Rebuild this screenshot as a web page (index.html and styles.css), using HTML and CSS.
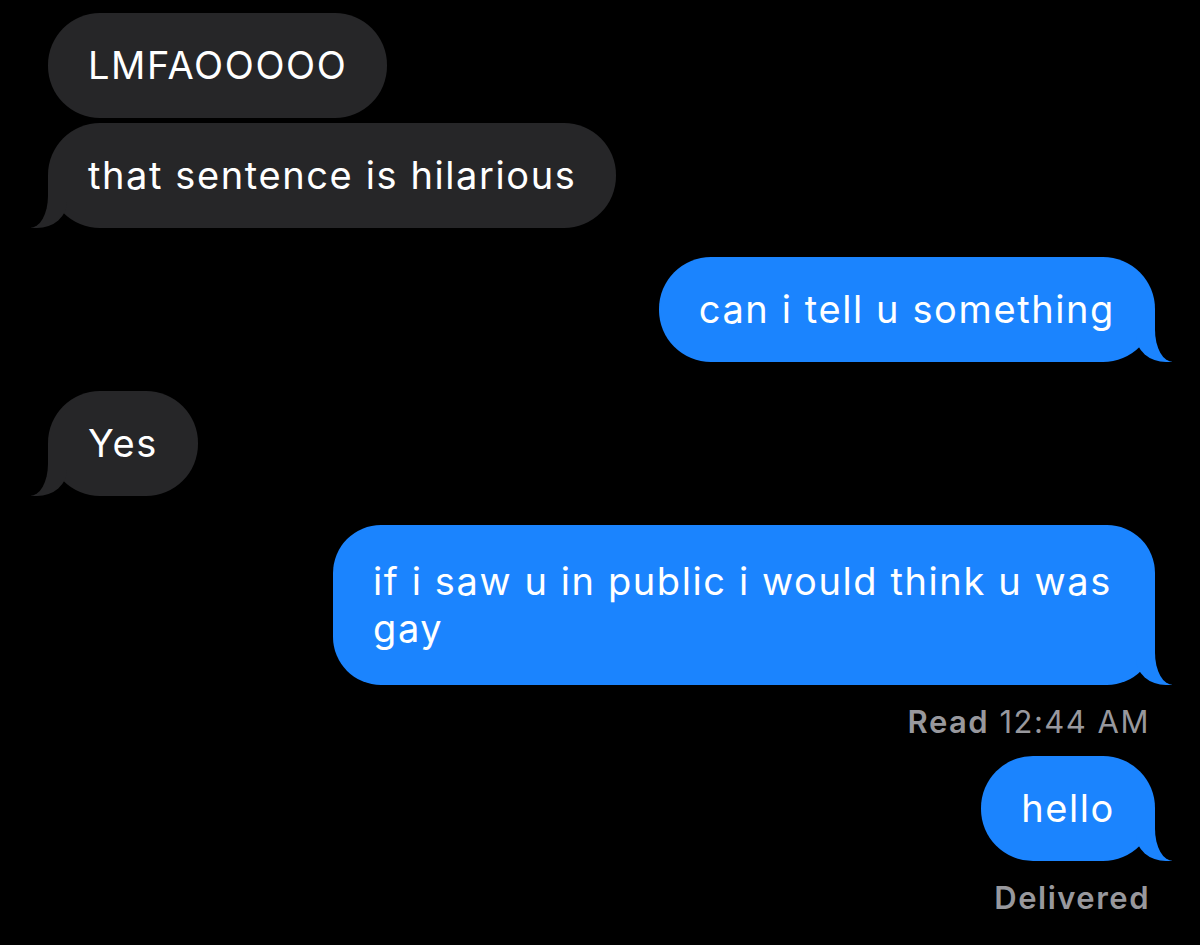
FILE: index.html
```html
<!DOCTYPE html>
<html lang="en">
<head>
  <meta charset="UTF-8">
  <meta name="viewport" content="width=device-width, initial-scale=1.0">
  <title>Messages</title>
  <link rel="stylesheet" href="styles.css">
</head>
<body>
  <main class="thread">
    <div class="group them">
      <p class="bubble">LMFAOOOOO</p>
      <p class="bubble tail">that sentence is hilarious</p>
    </div>

    <div class="group me">
      <p class="bubble tail">can i tell u something</p>
    </div>

    <div class="group them">
      <p class="bubble tail">Yes</p>
    </div>

    <div class="group me">
      <p class="bubble tail multi">if i saw u in public i would think u was gay</p>
      <p class="status"><b>Read</b> 12:44 AM</p>
    </div>

    <div class="group me">
      <p class="bubble tail">hello</p>
      <p class="status"><b>Delivered</b></p>
    </div>
  </main>
</body>
</html>
```

FILE: styles.css
```css
body {
  margin: 0;
  background-color: #000;
  font-family: Inter, "Noto Sans", sans-serif;
  color: #fff;
}

.thread {
  display: flex;
  flex-direction: column;
  padding: 13px 45px 30px 48px;
}

.group {
  display: flex;
  flex-direction: column;
}

.group + .group {
  margin-top: 29px;
}

.them {
  align-items: flex-start;
}

.me {
  align-items: flex-end;
}

.bubble {
  position: relative;
  z-index: 0;
  margin: 0;
  padding: 29px 40px;
  max-width: 742px;
  font-size: 38px;
  line-height: 47px;
  letter-spacing: 1.6px;
  border-radius: 52px;
}

.bubble.multi {
  padding-top: 33px;
  padding-bottom: 33px;
  border-radius: 48px;
}

.bubble + .bubble {
  margin-top: 5px;
}

.them .bubble {
  background-color: #262628;
}

.me .bubble {
  background-color: #1b84fe;
}

/* iMessage tail: a coloured blob with a black mask over it */
.tail::before,
.tail::after {
  content: "";
  position: absolute;
  z-index: -1;
  bottom: 0;
  height: 52px;
}

.me .tail::before {
  right: -17px;
  width: 36px;
  background-color: #1b84fe;
  border-bottom-left-radius: 30px 26px;
}

.me .tail::after {
  right: -40px;
  width: 40px;
  background-color: #000;
  border-bottom-left-radius: 18px 32px;
}

.them .tail::before {
  left: -17px;
  width: 36px;
  background-color: #262628;
  border-bottom-right-radius: 30px 26px;
}

.them .tail::after {
  left: -40px;
  width: 40px;
  background-color: #000;
  border-bottom-right-radius: 18px 32px;
}

.status {
  margin: 19px 5px -13px 0;
  font-size: 31px;
  line-height: 36px;
  letter-spacing: 1.5px;
  color: #98989d;
}

.group:last-child .status {
  margin-bottom: 0;
}

.status b {
  font-weight: 600;
}
```
